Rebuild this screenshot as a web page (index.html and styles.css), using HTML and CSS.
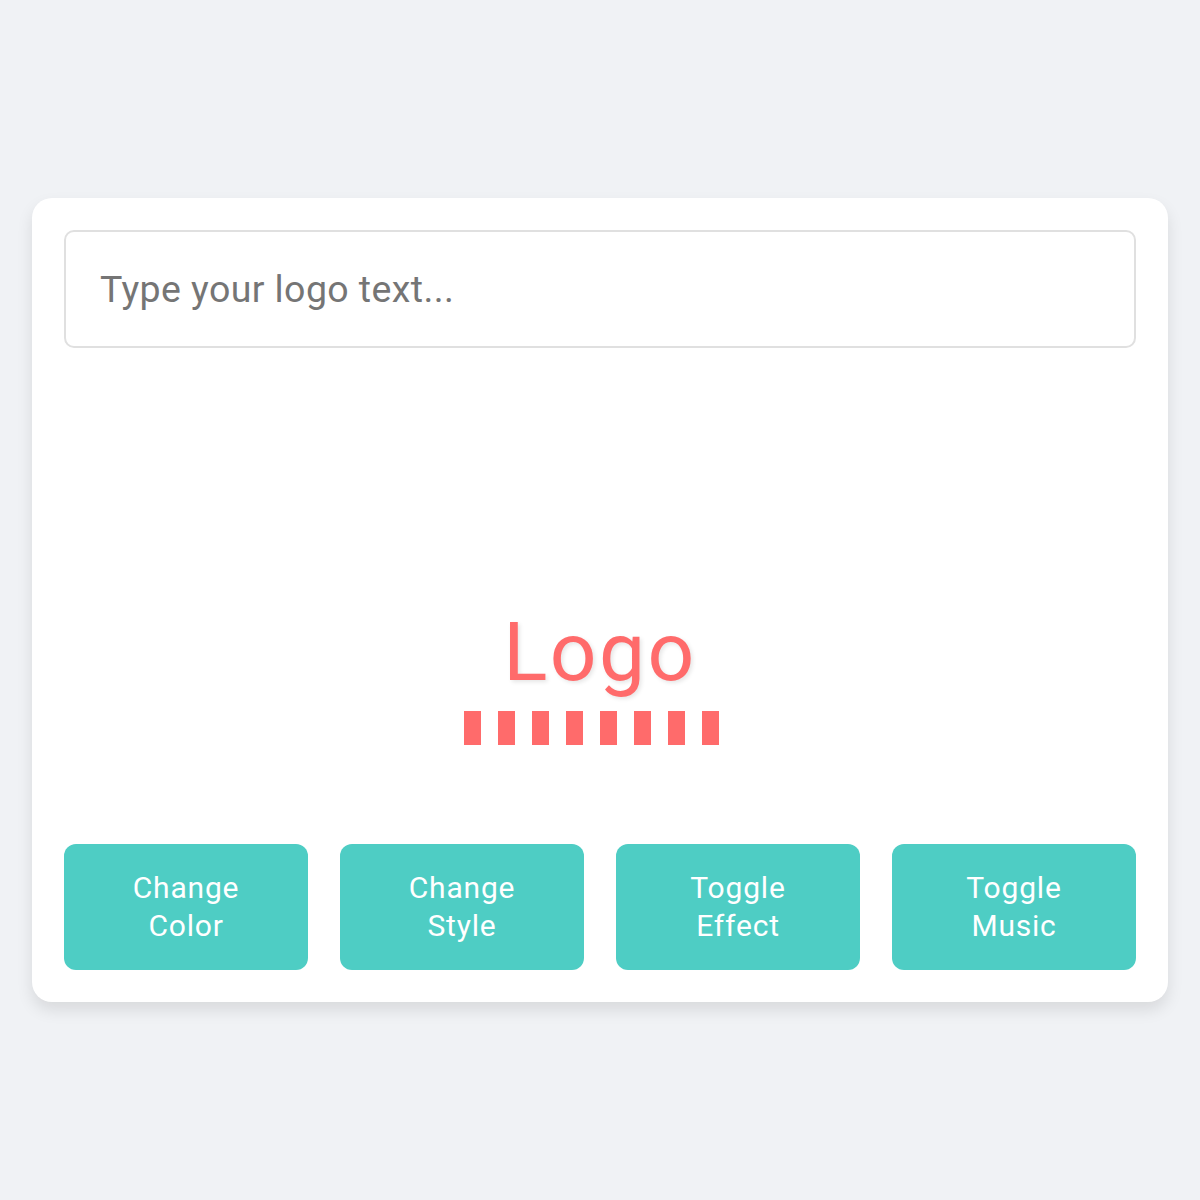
FILE: index.html
```html
<!DOCTYPE html>
<html>
<head>
  <title>Logo Maker</title>
  <meta name="viewport" content="width=device-width, initial-scale=1.0">
  <link rel="stylesheet" href="styles.css">
</head>
<body>
  <div class="card">
    <input type="text" id="logo-input" class="logo-input" placeholder="Type your logo text..." />

    <div class="display">
      <div id="logo" class="logo">Logo</div>
      <div class="bars">
        <span class="bar"></span>
        <span class="bar"></span>
        <span class="bar"></span>
        <span class="bar"></span>
        <span class="bar"></span>
        <span class="bar"></span>
        <span class="bar"></span>
        <span class="bar"></span>
      </div>
    </div>

    <div class="controls">
      <button class="button">Change Color</button>
      <button class="button">Change Style</button>
      <button class="button">Toggle Effect</button>
      <button class="button">Toggle Music</button>
    </div>
  </div>
</body>
</html>
```

FILE: styles.css
```css
body {
  font-family: Roboto, "Liberation Sans", sans-serif;
  background-color: #f0f2f5;
  margin: 0;
  padding: 0 32px;
  min-height: 100vh;
  display: flex;
  align-items: center;
  justify-content: center;
}

.card {
  width: 100%;
  box-sizing: border-box;
  background-color: #fff;
  border-radius: 20px;
  padding: 32px;
  box-shadow: 0 8px 16px rgba(0, 0, 0, 0.1);
}

.logo-input {
  display: block;
  width: 100%;
  height: 118px;
  box-sizing: border-box;
  padding: 0 34px;
  font-family: Roboto, "Liberation Sans", sans-serif;
  font-size: 37.5px;
  letter-spacing: 0.4px;
  color: #333;
  border: 2px solid #e0e0e0;
  border-radius: 10px;
  outline: none;
}

.logo-input::placeholder {
  color: #757575;
}

.display {
  padding: 255px 0 99px;
  text-align: center;
}

.logo {
  font-size: 82px;
  line-height: 98px;
  color: #ff6b6b;
  letter-spacing: 2.5px;
  text-shadow: 2px 2px 4px rgba(0, 0, 0, 0.1);
}

.bars {
  display: flex;
  justify-content: center;
  margin-top: 10px;
}

.bar {
  width: 17px;
  height: 34px;
  margin-right: 17px;
  background-color: #ff6b6b;
}

.controls {
  display: flex;
  gap: 32px;
}

.button {
  flex: 1;
  height: 126px;
  padding: 0 40px;
  font-family: Roboto, "Liberation Sans", sans-serif;
  font-size: 30px;
  line-height: 38px;
  letter-spacing: 0.8px;
  color: #fff;
  background-color: #4ecdc4;
  border: none;
  border-radius: 12px;
  cursor: pointer;
}
```
